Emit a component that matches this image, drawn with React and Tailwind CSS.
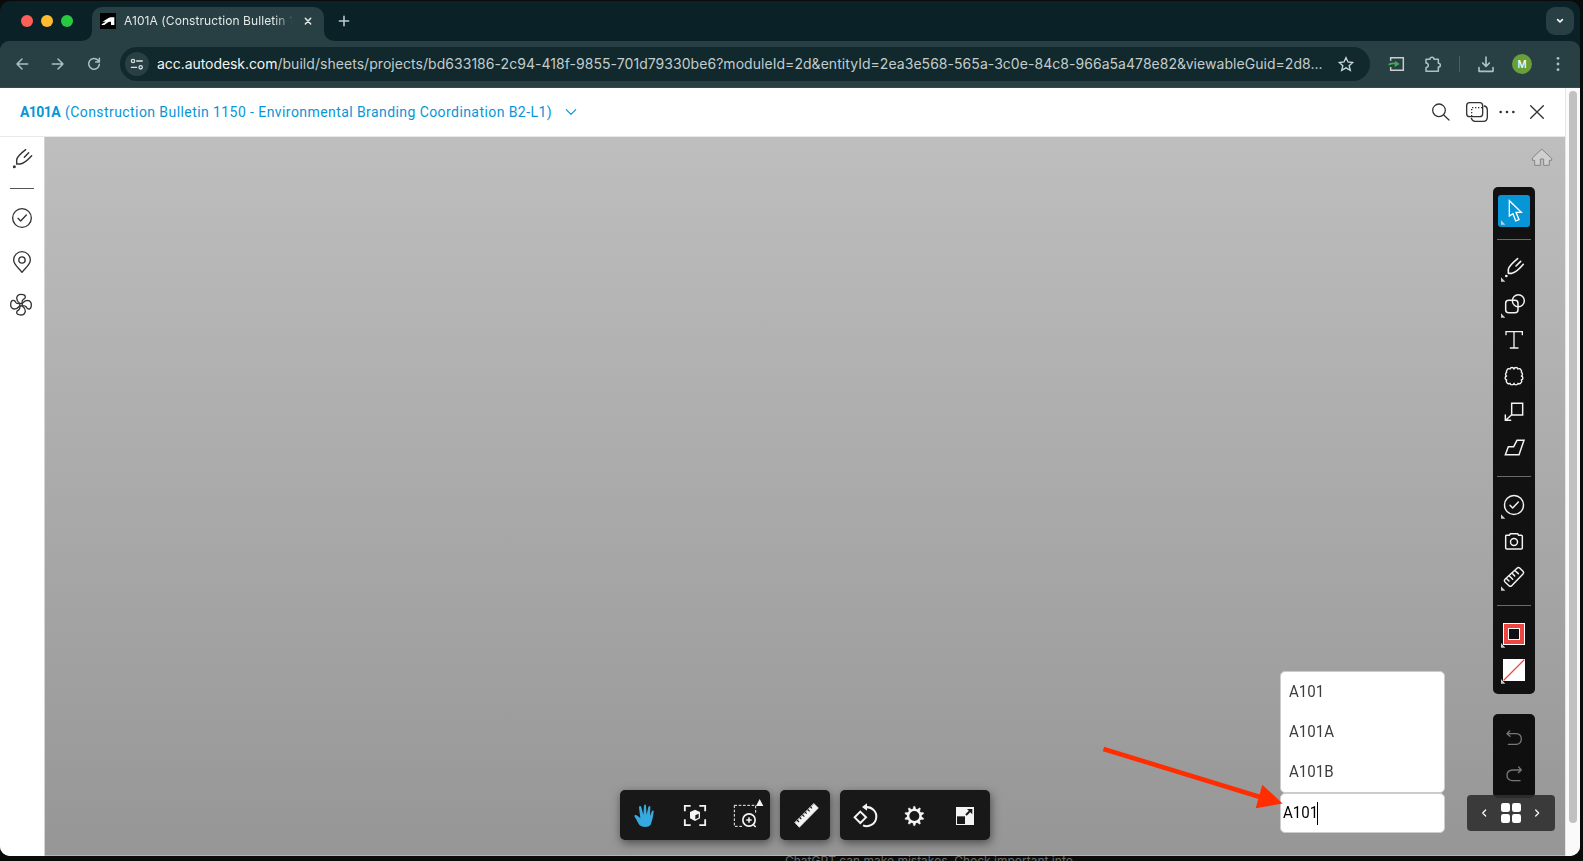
import React from "react";

/* Icon viewBoxes use a grid of three units per CSS pixel. */
function Icon({ box, className = "", sw = 4, children }) {
  const [, , w, h] = box.split(" ").map(Number);
  return (
    <svg
      viewBox={box}
      width={w / 3}
      height={h / 3}
      className={"block shrink-0 " + className}
      fill="none"
      stroke="currentColor"
      strokeWidth={sw}
      strokeLinecap="round"
      strokeLinejoin="round"
    >
      {children}
    </svg>
  );
}

function TabStrip() {
  return (
    <div className="flex h-10 shrink-0 items-end bg-[#0a2227]">
      <div className="flex h-10 w-[82px] items-center gap-2 pl-[21px]">
        <span className="size-3 rounded-full bg-[#ff5f57]" />
        <span className="size-3 rounded-full bg-[#febc2e]" />
        <span className="size-3 rounded-full bg-[#28c840]" />
      </div>
      <svg width="10" height="10" className="block text-[#283f43]">
        <path d="M10 0V10H0A10 10 0 0 0 10 0Z" fill="currentColor" />
      </svg>
      <div className="flex h-[34px] w-[232px] items-center rounded-t-[10px] bg-[#283f43] pb-[6px] pl-2">
        <svg width="16" height="16" viewBox="0 0 48 48" className="block shrink-0">
          <rect width="48" height="48" fill="#000" />
          <path d="M5 28L27 14Q29 13 32 13H43V36H33V26H29Q26 26 22 29L13 36H5V34L18 26H8Z" fill="#fff" />
        </svg>
        <div className="ml-2 w-[168px] overflow-hidden whitespace-nowrap font-['Inter',sans-serif] text-[12px] leading-4 tracking-[0.08px] text-[#e3e8e8] [mask-image:linear-gradient(to_right,#000_150px,transparent_170px)]">
          A101A (Construction Bulletin 1
        </div>
        <Icon box="909 48 30 30" className="ml-[11px] text-[#e3e8e8]" sw={4.6}>
          <path d="M916 55L932 72M932 55L916 72" />
        </Icon>
      </div>
      <svg width="10" height="10" className="block text-[#283f43]">
        <path d="M0 0V10H10A10 10 0 0 1 0 0Z" fill="currentColor" />
      </svg>
      <Icon box="1014 46 36 36" className="mb-[14px] ml-1 text-[#bfcccd]" sw={4.6}>
        <path d="M1018 64H1046M1032 50V78" />
      </Icon>
      <div className="mb-[6px] ml-auto mr-[6px] flex size-7 items-center justify-center rounded-[9px] bg-[#283f43]">
        <Icon box="825 52 30 24" className="text-white" sw={5}>
          <path d="M833 60L840 67L847 60" />
        </Icon>
      </div>
    </div>
  );
}

function Cell({ children }) {
  return <div className="flex h-9 w-9 shrink-0 items-center justify-center">{children}</div>;
}

function AddressBar() {
  return (
    <div className="h-[47px] shrink-0 bg-[#0a2227]">
      <div className="flex h-[47px] items-center rounded-t-[9px] border-b border-[#36494d] bg-[#283f43] pl-1 text-[#a9c1c6]">
        <Cell>
          <Icon box="45 171 42 42" sw={4.4}>
            <path d="M83 192H51M66 177L51 192L66 207" />
          </Icon>
        </Cell>
        <Cell>
          <Icon box="153 171 42 42" sw={4.4}>
            <path d="M157 192H189M174 177L189 192L174 207" />
          </Icon>
        </Cell>
        <Cell>
          <Icon box="261 171 42 42" sw={4.6}>
            <path d="M298 193A16 16 0 1 1 294 181L297 184M298 175V186H287" />
          </Icon>
        </Cell>
        <div className="ml-2 flex h-[34px] w-[1250px] items-center rounded-full bg-[#11292c] pl-[5px]">
          <div className="flex size-6 shrink-0 items-center justify-center rounded-full bg-[#283f43] text-[#dbe3e4]">
            <Icon box="390 171 42 42" sw={3.8}>
              <circle cx="399" cy="183" r="5" />
              <path d="M410 183H427M394 202H410" />
              <circle cx="422" cy="202" r="5" />
            </Icon>
          </div>
          <div className="ml-2 w-[1170px] shrink-0 whitespace-nowrap font-['Inter',sans-serif] text-[14px] leading-5 tracking-[0.045px] text-[#c3cccd]">
            <span className="tracking-[-0.06px] text-[#f2f5f5]">acc.autodesk.com</span>
            /build/sheets/projects/bd633186-2c94-418f-9855-701d79330be6?moduleId=2d&amp;entityId=2ea3e568-565a-3c0e-84c8-966a5a478e82&amp;viewableGuid=2d8...
          </div>
          <Icon box="171 165 54 54" className="ml-[10px] text-[#c8d6d8]" sw={4}>
            <path d="M198 173L204 186L218 187.500L207.500 197L211 211L198 203.500L185 211L188.500 197L178 187.500L192 186Z" strokeLinejoin="miter" />
          </Icon>
        </div>
        <div className="ml-[9px] flex items-center">
          <Cell>
            <Icon box="324 165 54 54" sw={4.4}>
              <path d="M332 182V173H370V211H332V201" stroke="#c9cfd0" strokeLinecap="butt" strokeLinejoin="miter" />
              <path d="M328 193Q336 189 348 191" stroke="#3fae4a" strokeWidth="5.500" />
              <path d="M345 182L359 192L344 201Z" fill="#3fae4a" stroke="none" />
            </Icon>
          </Cell>
          <Cell>
            <Icon box="432 162 54 54" sw={4.6}>
              <path d="M438 175H450Q450 169 456 169T462 175H475V187Q481 187 481 192.500T475 198V211H438V200Q445 199 445 193T438 186Z" />
            </Icon>
          </Cell>
        </div>
        <div className="ml-2 h-4 w-px bg-[#46606a]" />
        <div className="ml-2 flex items-center">
          <Cell>
            <Icon box="591 165 54 54" sw={5}>
              <path d="M618 171V198M608 189L618 199L628 189M597 203V214H639V203" />
            </Icon>
          </Cell>
          <Cell>
            <div className="flex size-5 items-center justify-center rounded-full bg-[#689f38] font-['Inter',sans-serif] text-[10px] font-medium text-white">
              M
            </div>
          </Cell>
          <Cell>
            <Icon box="822 165 24 54">
              <g fill="currentColor" stroke="none">
                <circle cx="834" cy="175" r="4.200" />
                <circle cx="834" cy="192" r="4.200" />
                <circle cx="834" cy="209" r="4.200" />
              </g>
            </Icon>
          </Cell>
        </div>
      </div>
    </div>
  );
}

function SheetHeader() {
  return (
    <div className="flex h-[49px] shrink-0 items-center border-b border-[#e8e8e8] bg-white pl-5 text-[#333]">
      <div className="flex whitespace-nowrap font-['Roboto',sans-serif] text-[14px] leading-5 text-[#0696d7]">
        <span className="w-[45px] font-bold tracking-[-0.55px]">A101A</span>
        <span className="w-[487px] tracking-[0.425px]">
          (Construction Bulletin 1150 - Environmental Branding Coordination B2-L1)
        </span>
      </div>
      <Icon box="495 200 36 30" className="ml-[13px] text-[#0696d7]" sw={3.6}>
        <path d="M499 208L513 222L527 208" />
      </Icon>
      <div className="ml-auto mr-[18px] flex items-center">
        <Icon box="450 303 66 66" sw={3.8}>
          <circle cx="477" cy="331" r="19" />
          <path d="M491 345L507 360" />
        </Icon>
        <Icon box="552 300 78 72" className="ml-3" sw={4}>
          <rect x="560" y="308" width="48" height="42" rx="9" />
          <path d="M613 318Q622 320 622 330V351Q622 364 610 364H585Q577 364 574 355" />
          <path d="M575 349V323H608" strokeDasharray="4 5" strokeLinecap="butt" />
        </Icon>
        <Icon box="651 315 60 42" className="ml-[7px]">
          <g fill="currentColor" stroke="none">
            <circle cx="662" cy="336" r="4" />
            <circle cx="681" cy="336" r="4" />
            <circle cx="700" cy="336" r="4" />
          </g>
        </Icon>
        <Icon box="741 306 60 60" className="ml-[10px]" sw={4}>
          <path d="M752 317L790 355M790 317L752 355" />
        </Icon>
      </div>
    </div>
  );
}

const BLADES = [0, 90, 180, 270];

function SideRail() {
  return (
    <div className="flex w-[45px] shrink-0 flex-col items-center border-r border-[#d4d4d4] bg-white pt-[10px] text-[#333]">
      <Icon box="33 201 66 66" sw={4.2}>
        <circle cx="43" cy="260" r="4.500" fill="currentColor" stroke="none" />
        <path d="M77 209Q51 229 50 240V252H61Q74 250 95 227M86 218L73 232" />
      </Icon>
      <div className="mt-[19px] h-px w-6 bg-[#555]" />
      <Icon box="33 381 66 66" className="mt-[18px]" sw={4}>
        <circle cx="66" cy="414" r="28" />
        <path d="M54 415L62 423L79 405" />
      </Icon>
      <Icon box="33 506 66 76" className="mt-5" sw={4}>
        <path d="M66 576C58 564 41 554 41 539A25 25 0 0 1 91 539C91 554 74 564 66 576Z" />
        <circle cx="66" cy="539" r="9.500" />
      </Icon>
      <Icon box="27 637 72 76" className="mr-[2px] mt-[18px]" sw={4}>
        <circle cx="63" cy="675" r="4" />
        {BLADES.map((a) => (
          <path key={a} d="M59 671Q50 664 50 655Q52 644 63 644Q76 644 76 652Q76 657 70 659Q66 662 66 670" transform={`rotate(${a} 63 675)`} />
        ))}
      </Icon>
    </div>
  );
}

function Rule() {
  return (
    <div className="flex h-[22px] items-center justify-center">
      <div className="h-px w-[34px] bg-[#6a6a6a]" />
    </div>
  );
}

function MarkupBar() {
  return (
    <div className="absolute right-[30px] top-[50px] flex h-[507px] w-[42px] flex-col rounded-[5px] bg-[#111] pt-2 text-[#f2f2f2]">
      <div className="mx-auto size-8 rounded-[3px] bg-[#0696d7]">
        <Icon box="84 45 96 96" sw={4}>
          <path d="M118 62V108L129 101L137 123L147 119L138 97H154Z" stroke="#fff" strokeLinejoin="miter" />
          <path d="M93 121V134H106Z" fill="#ccc" stroke="none" />
        </Icon>
      </div>
      <div className="h-px" />
      <Rule />
      <Icon box="69 207 126 108" className="-mt-px" sw={4.8}>
        <circle cx="109" cy="288" r="4" fill="currentColor" stroke="none" />
        <path d="M143 236Q117 257 115 268V280H126Q140 277 160 253M152 244L138 258" />
        <path d="M93 292V305H106Z" fill="#ccc" stroke="none" />
      </Icon>
      <Icon box="69 315 126 108" sw={4.4}>
        <rect x="107" y="361" width="37" height="37" rx="9" />
        <circle cx="145" cy="362" r="18" />
        <path d="M93 400V413H106Z" fill="#ccc" stroke="none" />
      </Icon>
      <Icon box="69 423 126 108" sw={4}>
        <path d="M108 464V455H157V464M132 455V503M121 504H144" strokeLinejoin="miter" />
      </Icon>
      <Icon box="69 531 126 108" sw={4.2}>
        <path d="M111 570A6 6 0 0 1 120 567A6.200 6.200 0 0 1 132 567A6.200 6.200 0 0 1 144 567A6 6 0 0 1 153 570A6 6 0 0 1 154 577A6.200 6.200 0 0 1 154 588A6.200 6.200 0 0 1 154 600A6 6 0 0 1 153 608A6 6 0 0 1 144 610A6.200 6.200 0 0 1 132 610A6.200 6.200 0 0 1 120 610A6 6 0 0 1 111 608A6 6 0 0 1 110 600A6.200 6.200 0 0 1 110 588A6.200 6.200 0 0 1 110 577A6 6 0 0 1 111 570Z" />
      </Icon>
      <Icon box="69 639 126 108" sw={4.4}>
        <path d="M125 670H158V705H125ZM125 704L107 721M106 705V721H122" strokeLinejoin="miter" />
      </Icon>
      <Icon box="69 747 126 108" sw={4.4}>
        <path d="M106 824L115 800H131L141 781H162L147 824Z" strokeLinejoin="miter" />
      </Icon>
      <Rule />
      <Icon box="69 81 126 108" sw={4.4}>
        <circle cx="132" cy="135" r="28.500" />
        <path d="M120 136L128 144L145 126" />
        <path d="M93 163V176H106Z" fill="#ccc" stroke="none" />
      </Icon>
      <Icon box="69 189 126 108" sw={4.4}>
        <path d="M107 228Q107 226 110 226H118L121 221H143L146 226H154Q157 226 157 229V264Q157 267 154 267H110Q107 267 107 264Z" />
        <circle cx="132" cy="246" r="10.500" />
      </Icon>
      <Icon box="69 297 126 108" sw={4.4}>
        <path d="M141 325Q145 320 149 324L159 334Q163 338 159 342L125 377Q121 381 117 377L105 366Q101 362 105 358ZM136 333L145 341M128 341L134 348M119 349L128 358M111 357L117 363" />
        <path d="M93 379V392H106Z" fill="#ccc" stroke="none" />
      </Icon>
      <div className="-mb-px -mt-px pb-px">
        <Rule />
      </div>
      <Icon box="69 468 126 108">
        <g stroke="none">
          <path d="M99 489H165V555H99Z" fill="#fff" />
          <path d="M102 492H162V552H102Z" fill="#ee4540" />
          <path d="M114 504H150V540H114Z" fill="#fff" />
          <path d="M117 507H147V537H117Z" fill="#111" />
          <path d="M93 549V563H106Z" fill="#ccc" />
        </g>
      </Icon>
      <Icon box="69 576 126 108">
        <path d="M99 597H165V663H99Z" fill="#fff" stroke="none" />
        <path d="M102 660L162 600" stroke="#ee4540" strokeWidth="3.600" />
        <path d="M93 657V671H106Z" fill="#ccc" stroke="none" />
      </Icon>
    </div>
  );
}

function HistoryBar() {
  return (
    <div className="absolute right-[30px] top-[577px] flex h-[84px] w-[42px] flex-col rounded-[5px] bg-[#0f0f0f] pt-[6px] text-[#777]">
      <Icon box="129 61 126 108" sw={4}>
        <path d="M179 94L171 102L180 110M172 102H200Q214 104 214 118T200 134H175" />
      </Icon>
      <Icon box="129 168 126 108" sw={4}>
        <path d="M206 201L214 210L205 218M213 210H186Q171 212 171 226T186 242H210" />
      </Icon>
    </div>
  );
}

function PagerBar() {
  return (
    <div className="absolute right-[10px] top-[658px] flex h-9 w-[88px] items-center rounded bg-[#303030]/90 text-white">
      <Icon box="51 285 102 108" sw={3.6}>
        <path d="M107 330L98 339L107 348" />
      </Icon>
      <Icon box="153 285 60 108">
        <g fill="currentColor" stroke="none">
          <rect x="153" y="309" width="27" height="27" rx="7" />
          <rect x="186" y="309" width="27" height="27" rx="7" />
          <rect x="153" y="342" width="27" height="27" rx="7" />
          <rect x="186" y="342" width="27" height="27" rx="7" />
        </g>
      </Icon>
      <Icon box="213 285 102 108" sw={3.6}>
        <path d="M257 330L266 339L257 348" />
      </Icon>
    </div>
  );
}

function Group({ children }) {
  return <div className="flex h-[50px] rounded-[5px] bg-[#181818] shadow-[1px_3px_10px_rgba(0,0,0,0.5)]">{children}</div>;
}

const TEETH = [0, 36, 72, 108, 144, 180, 216, 252, 288, 324];

function ViewerToolbar() {
  return (
    <div className="absolute left-[575px] top-[653px] flex gap-[10px] text-[#f4f4f4]">
      <Group>
        <Icon box="60 60 150 150" className="text-[#35a9e0]">
          <path d="M119 166C113 158 109 148 103 139C102 135 108 133 112 137L121 144L117 113C117 107 123 107 124 112L130 134L132 107C133 102 138 102 138 107L140 134L145 111C147 106 151 107 151 112L150 138L155 125C157 120 162 121 161 127C159 141 157 152 152 164Q147 171 136 171Q124 171 119 166Z" fill="currentColor" stroke="none" />
        </Icon>
        <Icon box="210 60 150 150">
          <path d="M254.500 124V107.500H272M298 107.500H315.500V124M315.500 148V165.500H298M272 165.500H254.500V148" strokeWidth="5.500" strokeLinecap="butt" strokeLinejoin="miter" />
          <path d="M285 119L300 126V145L285 153L270 145V126Z" fill="currentColor" stroke="none" />
          <path d="M286 136L296 131V143L286 148Z" fill="#181818" stroke="none" />
        </Icon>
        <Icon box="360 60 150 150">
          <path d="M403 106H467V130M403 106V169H430" strokeWidth="3" strokeDasharray="8 5" strokeLinecap="butt" />
          <circle cx="447" cy="150" r="18.500" strokeWidth="5" />
          <path d="M447 142V158M439 150H455M459 163L467 171" strokeWidth="4.500" strokeLinecap="butt" />
          <path d="M479 87L490 108H468Z" fill="currentColor" stroke="none" />
        </Icon>
      </Group>
      <Group>
        <Icon box="540 60 150 150">
          <path d="M642 101L655 114L598 172L585 158Z" fill="currentColor" strokeWidth="2" />
          <path d="M591 150L597 156M599 142L604 147M607 134L613 140M615 126L620 131M623 118L629 124M631 110L636 115" stroke="#181818" strokeWidth="3.500" strokeLinecap="butt" />
        </Icon>
      </Group>
      <Group>
        <Icon box="720 60 150 150">
          <path d="M781 125L798 142L781 159L764 142Z" strokeWidth="6" strokeLinejoin="miter" />
          <path d="M798 111.500A28.500 28.500 0 1 1 789 166" strokeWidth="6" strokeLinecap="butt" />
          <path d="M786 111L801 100V122Z" fill="currentColor" stroke="none" />
        </Icon>
        <Icon box="870 60 150 150">
          <circle cx="943" cy="138" r="18.500" strokeWidth="7" />
          {TEETH.map((a) => (
            <path key={a} d="M938 119L941 109H945L948 119Z" fill="currentColor" stroke="currentColor" strokeWidth="1" transform={`rotate(${a} 943 138)`} />
          ))}
        </Icon>
        <Icon box="1020 60 150 150">
          <path d="M1068 111H1122V165H1068Z" fill="currentColor" stroke="none" />
          <path d="M1071 139H1095V162H1071Z" fill="#181818" stroke="none" />
          <path d="M1098 135L1112 121" stroke="#181818" strokeWidth="6" strokeLinecap="butt" />
          <path d="M1101 117H1117V133Z" fill="#181818" stroke="none" />
        </Icon>
      </Group>
    </div>
  );
}

function SheetSearch() {
  return (
    <div className="absolute right-[120px] top-[534px] w-[165px] font-['Roboto',sans-serif] text-[16px] text-[#3c3c3c]">
      <div className="h-[122px] rounded-[5px] border border-[#ccc] bg-white pl-2">
        {["A101", "A101A", "A101B"].map((s) => (
          <div key={s} className="flex h-10 items-center">
            <span className="origin-left scale-x-[0.94]">{s}</span>
          </div>
        ))}
      </div>
      <div className="flex h-10 items-center rounded-[5px] border border-[#ccc] bg-white pl-[2px] text-black">
        <span className="w-[34px] origin-left scale-x-[0.94]">A101</span>
        <span className="h-[23px] w-px bg-black" />
      </div>
    </div>
  );
}

function Canvas() {
  return (
    <div className="relative flex-1 overflow-hidden border-b border-[#b5b5b5] bg-linear-to-b from-[#bebebe] to-[#969696]">
      <div className="absolute right-3 top-[10px] text-[#858585]">
        <Icon box="753 441 66 66" sw={3}>
          <path d="M786 448L815 475V481H808V496H791V477H781V496H764V481H757V475Z" fill="#cfcfcf" />
        </Icon>
      </div>
      <MarkupBar />
      <HistoryBar />
      <PagerBar />
      <ViewerToolbar />
      <SheetSearch />
      <svg width="190" height="70" viewBox="1100 740 190 70" className="absolute left-[1055px] top-[603px]">
        <path d="M1103.500 749L1260 797" stroke="#ff2d00" strokeWidth="4.600" />
        <path d="M1282.500 803.500L1262.300 784.700L1255.700 808.300Z" fill="#ff2d00" />
      </svg>
    </div>
  );
}

export default function App() {
  return (
    <div className="flex h-[861px] w-[1583px] flex-col overflow-hidden bg-[#0b0b0b] pt-px">
      <div className="flex h-[855px] w-[1580px] shrink-0 flex-col overflow-hidden rounded-[10px]">
        <TabStrip />
        <AddressBar />
        <div className="flex min-h-0 flex-1 bg-white">
          <div className="flex w-[1565px] flex-col">
            <SheetHeader />
            <div className="flex min-h-0 flex-1">
              <SideRail />
              <Canvas />
            </div>
          </div>
          <div className="flex w-[15px] justify-center border-l border-[#e6e6e6] bg-[#fafafa] pt-[3px]">
            <div className="h-[732px] w-2 rounded-full bg-[#c1c1c1]" />
          </div>
        </div>
      </div>
      <div className="h-[5px] overflow-hidden pl-[785px]">
        <div className="whitespace-nowrap font-['Inter',sans-serif] text-[12px] leading-[10px] text-[#6a6a6a]">
          ChatGPT can make mistakes. Check important info.
        </div>
      </div>
    </div>
  );
}
